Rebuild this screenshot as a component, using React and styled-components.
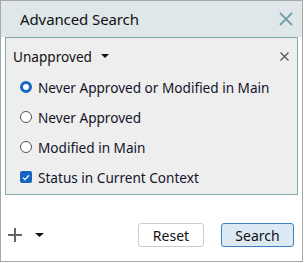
import React from "react";
import styled, { createGlobalStyle } from "styled-components";

const Global = createGlobalStyle`
  html, body { margin: 0; padding: 0; background: #ffffff; }
  body { font-family: "Noto Sans", "Open Sans", sans-serif; }
`;

const Window = styled.div`
  box-sizing: border-box;
  width: 303px;
  height: 262px;
  border: 1px solid #a6a6a6;
  background: #ffffff;
  display: flex;
  flex-direction: column;
`;

const Header = styled.div`
  height: 36px;
  flex: none;
  background: #dfe7ea;
  display: flex;
  align-items: center;
  justify-content: space-between;
  padding: 0 9px 0 19px;
`;

const Title = styled.span`
  font-size: 15px;
  color: #111111;
  letter-spacing: -0.1px;
`;

const Body = styled.div`
  padding: 0 4px;
  display: flex;
  flex-direction: column;
  flex: 1;
`;

const Panel = styled.div`
  box-sizing: border-box;
  height: 158px;
  border: 1px solid #7ea9ae;
  background: #eeeeee;
  display: flex;
  flex-direction: column;
`;

const PanelHead = styled.div`
  height: 32px;
  display: flex;
  align-items: center;
  justify-content: space-between;
  padding: 2px 8px 0 7px;
`;

const Dropdown = styled.div`
  display: flex;
  align-items: center;
  gap: 9px;
  font-size: 13.6px;
  color: #111111;
`;

const OptionList = styled.div`
  display: flex;
  flex-direction: column;
  padding-left: 14px;
`;

const Option = styled.label`
  height: 30px;
  display: flex;
  align-items: center;
  gap: 6px;
  font-size: 13.6px;
  color: #14142b;
`;

const Radio = styled.span`
  box-sizing: border-box;
  width: 12px;
  height: 12px;
  border-radius: 50%;
  background: #ffffff;
  border: ${(p) => (p.$checked ? "3.5px solid #1665c0" : "1px solid #555555")};
  flex: none;
`;

const Check = styled.span`
  box-sizing: border-box;
  width: 12px;
  height: 12px;
  border-radius: 2px;
  background: #1665c0;
  display: flex;
  align-items: center;
  justify-content: center;
  flex: none;
`;

const Footer = styled.div`
  margin-top: auto;
  height: 24px;
  margin-bottom: 14px;
  display: flex;
  align-items: center;
  padding: 0 8px 0 7px;
`;

const AddGroup = styled.div`
  display: flex;
  align-items: center;
  gap: 13px;
  margin-right: auto;
`;

const Button = styled.button`
  box-sizing: border-box;
  height: 24px;
  width: ${(p) => p.$w}px;
  border-radius: 3px;
  font-family: "Noto Sans", "Open Sans", sans-serif;
  font-size: 14px;
  color: #111111;
  padding: 0;
  background: ${(p) => (p.$primary ? "#dde9f5" : "#ffffff")};
  border: 1px solid ${(p) => (p.$primary ? "#3b82c4" : "#cccccc")};
  margin-left: ${(p) => p.$ml || 0}px;
`;

const Caret = ({ w = 8, h = 4 }) => (
  <svg width={w} height={h} viewBox={`0 0 ${w} ${h}`}>
    <polygon points={`0,0 ${w},0 ${w / 2},${h}`} fill="#111" />
  </svg>
);

export default function App() {
  return (
    <>
      <Global />
      <Window>
        <Header>
          <Title>Advanced Search</Title>
          <svg width="14" height="14" viewBox="0 0 14 14">
            <path d="M1 1 L13 13 M13 1 L1 13" stroke="#6fa0a8" strokeWidth="1.8" />
          </svg>
        </Header>
        <Body>
          <Panel>
            <PanelHead>
              <Dropdown>
                <span>Unapproved</span>
                <Caret w={8} h={4} />
              </Dropdown>
              <svg width="9" height="9" viewBox="0 0 9 9">
                <path d="M0.5 0.5 L8.5 8.5 M8.5 0.5 L0.5 8.5" stroke="#555" strokeWidth="1.3" />
              </svg>
            </PanelHead>
            <OptionList>
              <Option>
                <Radio $checked />
                Never Approved or Modified in Main
              </Option>
              <Option>
                <Radio />
                Never Approved
              </Option>
              <Option>
                <Radio />
                Modified in Main
              </Option>
              <Option>
                <Check>
                  <svg width="8" height="7" viewBox="0 0 8 7">
                    <path d="M1 3.6 L3 5.6 L7 1.2" stroke="#ffffff" strokeWidth="1.3" fill="none" />
                  </svg>
                </Check>
                Status in Current Context
              </Option>
            </OptionList>
          </Panel>
        </Body>
        <Footer>
          <AddGroup>
            <svg width="14" height="14" viewBox="0 0 14 14">
              <path d="M7 0 V14 M0 7 H14" stroke="#666" strokeWidth="2" />
            </svg>
            <Caret w={9} h={4} />
          </AddGroup>
          <Button $w={66}>Reset</Button>
          <Button $w={73} $ml={17} $primary>
            Search
          </Button>
        </Footer>
      </Window>
    </>
  );
}
